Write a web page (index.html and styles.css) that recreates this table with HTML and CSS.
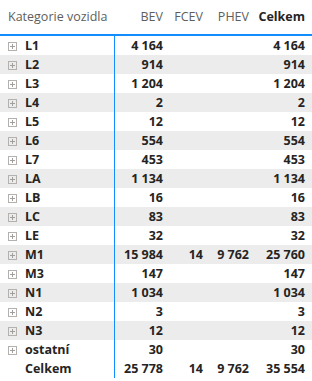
FILE: index.html
```html
<!DOCTYPE html>
<html lang="cs">
<head>
<meta charset="utf-8">
<link rel="stylesheet" href="styles.css">
</head>
<body>
<div class="matrix">
  <div class="row head">
    <div class="cell label">Kategorie vozidla</div>
    <div class="cell">BEV</div>
    <div class="cell">FCEV</div>
    <div class="cell">PHEV</div>
    <div class="cell total">Celkem</div>
  </div>
  <div class="row"><div class="cell label"><span class="exp"></span>L1</div><div class="cell">4 164</div><div class="cell"></div><div class="cell"></div><div class="cell">4 164</div></div>
  <div class="row alt"><div class="cell label"><span class="exp"></span>L2</div><div class="cell">914</div><div class="cell"></div><div class="cell"></div><div class="cell">914</div></div>
  <div class="row"><div class="cell label"><span class="exp"></span>L3</div><div class="cell">1 204</div><div class="cell"></div><div class="cell"></div><div class="cell">1 204</div></div>
  <div class="row alt"><div class="cell label"><span class="exp"></span>L4</div><div class="cell">2</div><div class="cell"></div><div class="cell"></div><div class="cell">2</div></div>
  <div class="row"><div class="cell label"><span class="exp"></span>L5</div><div class="cell">12</div><div class="cell"></div><div class="cell"></div><div class="cell">12</div></div>
  <div class="row alt"><div class="cell label"><span class="exp"></span>L6</div><div class="cell">554</div><div class="cell"></div><div class="cell"></div><div class="cell">554</div></div>
  <div class="row"><div class="cell label"><span class="exp"></span>L7</div><div class="cell">453</div><div class="cell"></div><div class="cell"></div><div class="cell">453</div></div>
  <div class="row alt"><div class="cell label"><span class="exp"></span>LA</div><div class="cell">1 134</div><div class="cell"></div><div class="cell"></div><div class="cell">1 134</div></div>
  <div class="row"><div class="cell label"><span class="exp"></span>LB</div><div class="cell">16</div><div class="cell"></div><div class="cell"></div><div class="cell">16</div></div>
  <div class="row alt"><div class="cell label"><span class="exp"></span>LC</div><div class="cell">83</div><div class="cell"></div><div class="cell"></div><div class="cell">83</div></div>
  <div class="row"><div class="cell label"><span class="exp"></span>LE</div><div class="cell">32</div><div class="cell"></div><div class="cell"></div><div class="cell">32</div></div>
  <div class="row alt"><div class="cell label"><span class="exp"></span>M1</div><div class="cell">15 984</div><div class="cell">14</div><div class="cell">9 762</div><div class="cell">25 760</div></div>
  <div class="row"><div class="cell label"><span class="exp"></span>M3</div><div class="cell">147</div><div class="cell"></div><div class="cell"></div><div class="cell">147</div></div>
  <div class="row alt"><div class="cell label"><span class="exp"></span>N1</div><div class="cell">1 034</div><div class="cell"></div><div class="cell"></div><div class="cell">1 034</div></div>
  <div class="row"><div class="cell label"><span class="exp"></span>N2</div><div class="cell">3</div><div class="cell"></div><div class="cell"></div><div class="cell">3</div></div>
  <div class="row alt"><div class="cell label"><span class="exp"></span>N3</div><div class="cell">12</div><div class="cell"></div><div class="cell"></div><div class="cell">12</div></div>
  <div class="row"><div class="cell label"><span class="exp"></span>ostatní</div><div class="cell">30</div><div class="cell"></div><div class="cell"></div><div class="cell">30</div></div>
  <div class="row sum"><div class="cell label">Celkem</div><div class="cell">25 778</div><div class="cell">14</div><div class="cell">9 762</div><div class="cell">35 554</div></div>
</div>
</body>
</html>
```

FILE: styles.css
```css
html, body {
  margin: 0;
  padding: 0;
  background: #ffffff;
}
body {
  font-family: "Open Sans", "Noto Sans", sans-serif;
  font-size: 12.5px;
  color: #252423;
}
.matrix {
  width: 312px;
}
.row {
  display: grid;
  grid-template-columns: 115px 53px 40px 46px 56px;
  height: 19px;
  align-items: center;
}
.row .cell {
  text-align: right;
  padding-right: 5px;
  font-weight: 700;
  line-height: 19px;
  height: 19px;
  white-space: nowrap;
}
.row .label {
  text-align: left;
  padding-right: 0;
  padding-left: 25px;
  border-right: 1px solid #118dff;
  position: relative;
}
.row.alt {
  background: #ececec;
}
.head {
  height: 34px;
  border-bottom: 2px solid #118dff;
}
.head .cell {
  font-weight: 400;
  color: #605e5c;
  height: 34px;
  line-height: 34px;
}
.head .label {
  padding-left: 8px;
  border-right: none;
}
.head .total {
  font-weight: 700;
  color: #252423;
}
.exp {
  position: absolute;
  left: 8px;
  top: 6px;
  width: 7px;
  height: 7px;
  border: 1px solid #b3b0ad;
  box-sizing: content-box;
}
.exp::before, .exp::after {
  content: "";
  position: absolute;
  background: #a19f9d;
}
.exp::before {
  left: 1px;
  top: 3px;
  width: 5px;
  height: 1px;
}
.exp::after {
  left: 3px;
  top: 1px;
  width: 1px;
  height: 5px;
}
```
